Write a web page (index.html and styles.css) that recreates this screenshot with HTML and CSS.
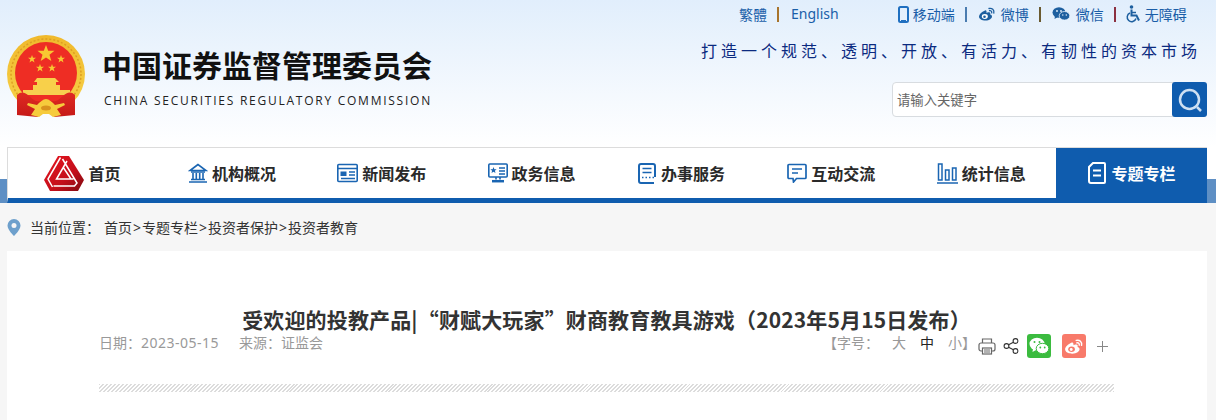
FILE: index.html
```html
<!DOCTYPE html>
<html lang="zh-CN">
<head>
<meta charset="utf-8">
<title>中国证券监督管理委员会</title>
<link rel="stylesheet" href="styles.css">
</head>
<body>
<header class="header">
  <div class="brand">
    <svg class="emblem" viewBox="0 0 84 84" width="84" height="84">
      <defs>
        <linearGradient id="ring" x1="0" y1="0" x2="0" y2="1"><stop offset="0" stop-color="#f0b92c"/><stop offset="1" stop-color="#f7d24a"/></linearGradient>
        <linearGradient id="drape" x1="0" y1="0" x2="0" y2="1"><stop offset="0" stop-color="#e02a22"/><stop offset="1" stop-color="#c51a18"/></linearGradient>
      </defs>
      <circle cx="39" cy="39" r="39" fill="url(#ring)"/>
      <circle cx="39" cy="39" r="35" fill="none" stroke="#dd9e22" stroke-width="1.500" stroke-dasharray="2 2"/>
      <circle cx="39" cy="38" r="31" fill="#ee2d24"/>
      <polygon points="39,10 41.200,15.800 47.500,15.800 42.500,19.800 44.300,26 39,22.400 33.700,26 35.500,19.800 30.500,15.800 36.800,15.800" fill="#f8c832"/>
      <polygon points="25,20 26,22.800 29,22.800 26.600,24.600 27.500,27.500 25,25.800 22.500,27.500 23.400,24.600 21,22.800 24,22.800" fill="#f8c832"/>
      <polygon points="54,20 55,22.800 58,22.800 55.600,24.600 56.500,27.500 54,25.800 51.500,27.500 52.400,24.600 50,22.800 53,22.800" fill="#f8c832"/>
      <polygon points="33,29 34,31.800 37,31.800 34.600,33.600 35.500,36.500 33,34.800 30.500,36.500 31.400,33.600 29,31.800 32,31.800" fill="#f8c832"/>
      <polygon points="45,29 46,31.800 49,31.800 46.600,33.600 47.500,36.500 45,34.800 42.500,36.500 43.400,33.600 41,31.800 44,31.800" fill="#f8c832"/>
      <path d="M30 43h18l4 4h-3v3h4v5H26v-5h4v-3h-3z" fill="#f8d04a"/>
      <path d="M16 55h47v5H16z" fill="#f7d050"/>
      <path d="M10 60c4-4 8-3 12 1 6 5 8 6 12 5l-6 8 3 8-21-2z" fill="url(#drape)"/>
      <path d="M68 60c-4-4-8-3-12 1-6 5-8 6-12 5l6 8-3 8 21-2z" fill="url(#drape)"/>
      <path d="M21 68l9 2c3-3 6-6 9-6s6 3 9 6l9-2 1 2-8 4 4 6-8 2-4-3h-6l-4 3-8-2 4-6-8-4z" fill="#f6cb3c"/>
      <ellipse cx="39" cy="73" rx="5" ry="2.500" fill="#d9931e"/>
    </svg>
    <div class="brand-text">
      <h1 class="brand-cn">中国证券监督管理委员会</h1>
      <p class="brand-en">CHINA SECURITIES REGULATORY COMMISSION</p>
    </div>
  </div>
  <div class="tools">
    <div class="toplinks">
      <a class="tl">繁體</a><i class="sep sep-brown first-sep"></i><a class="tl en">English</a>
      <span class="tl-group">
        <svg class="ti" width="11" height="17" viewBox="0 0 11 17"><rect x="1" y="1" width="9" height="15" rx="1.500" fill="none" stroke="#1f6fc0" stroke-width="2"/><rect x="3" y="14" width="5" height="1" fill="#1f6fc0"/></svg>
        <a class="tl">移动端</a><i class="sep sep-blue"></i>
        <svg class="ti ti-wb" width="18" height="14" viewBox="0 0 18 14"><path d="M7 3.500C3.500 5 1 7.500 1 9.500 1 12 4 13.500 7.500 13.500c4 0 6.500-2.200 6.500-4 0-1.200-1-1.800-1.800-2 .4-1.300 0-2-.9-2.200-1-.2-2.300.4-2.800.6.300-1.400-.3-3-1.500-2.400z" fill="#1d5f9f"/><ellipse cx="6.800" cy="9.500" rx="3" ry="2.400" fill="#fff"/><circle cx="6.500" cy="9.700" r="1.300" fill="#1d5f9f"/><path d="M11 1.500c3-.8 5.500 1.500 4.800 4.500M11.500 3.700c1.500-.3 2.500.7 2.200 2.100" fill="none" stroke="#1d5f9f" stroke-width="1.300" stroke-linecap="round"/></svg>
        <a class="tl">微博</a><i class="sep sep-olive"></i>
        <svg class="ti ti-wx" width="18" height="14" viewBox="0 0 18 14"><ellipse cx="7" cy="5.500" rx="6.500" ry="5.200" fill="#1d5f9f"/><path d="M3 9l-.5 3 3-1.800z" fill="#1d5f9f"/><ellipse cx="12.500" cy="8.800" rx="5.300" ry="4.300" fill="#1d5f9f" stroke="#e8f2fd" stroke-width=".8"/><circle cx="5" cy="4" r=".9" fill="#e8f2fd"/><circle cx="9" cy="4" r=".9" fill="#e8f2fd"/><circle cx="10.800" cy="8" r=".7" fill="#e8f2fd"/><circle cx="14.300" cy="8" r=".7" fill="#e8f2fd"/></svg>
        <a class="tl tl-wx">微信</a><i class="sep sep-red"></i>
        <svg class="ti ti-a11y" width="15" height="18" viewBox="0 0 15 18"><circle cx="5.500" cy="2" r="1.800" fill="#1d5f9f"/><path d="M5.500 4.500v6h5l2.500 5" fill="none" stroke="#1d5f9f" stroke-width="2"/><path d="M5.500 7.500h4.500" stroke="#1d5f9f" stroke-width="1.500"/><path d="M4 8a4.500 4.500 0 1 0 6 5.500" fill="none" stroke="#1d5f9f" stroke-width="1.500"/></svg>
        <a class="tl">无障碍</a>
      </span>
    </div>
    <p class="slogan">打造一个规范、透明、开放、有活力、有韧性的资本市场</p>
    <form class="search">
      <span class="search-input">请输入关键字</span>
      <span class="search-btn">
        <svg width="26" height="26" viewBox="0 0 26 26"><circle cx="12.500" cy="12.500" r="9.500" fill="none" stroke="#cfe0f2" stroke-width="2.500"/><path d="M20 20l4 4" stroke="#cfe0f2" stroke-width="2.500"/></svg>
      </span>
    </form>
  </div>
</header>

<div class="navband">
  <nav class="nav">
    <a class="nav-item">
      <svg class="nav-logo" width="40" height="35" viewBox="0 0 40 35">
        <defs>
          <linearGradient id="lg" x1="0" y1="0" x2="1" y2="1"><stop offset="0" stop-color="#e8141f"/><stop offset=".6" stop-color="#c40f1b"/><stop offset="1" stop-color="#7e0a10"/></linearGradient>
        </defs>
        <path d="M14 0h11l15 24-6 11H6L0 24z" fill="url(#lg)"/>
        <path d="M16.500 1.500L4 23l4.500 8M23 5l-10.500 18h17M18.500 3l14.500 24-2.500 3H9.500M19 11l8 12" fill="none" stroke="#fff" stroke-width="1.500"/>
      </svg>
      <span>首页</span>
    </a>
    <a class="nav-item">
      <svg class="nav-ico" width="20" height="20" viewBox="0 0 20 20" fill="none" stroke="#1a65b2" stroke-width="1.600"><path d="M10 1.500L2 7.500h16z"/><path d="M3 9h14M5 10v6M8.300 10v6M11.700 10v6M15 10v6M3 16.500h14M1 19h18"/></svg>
      <span>机构概况</span>
    </a>
    <a class="nav-item">
      <svg class="nav-ico" width="21" height="20" viewBox="0 0 21 20" fill="none" stroke="#1a65b2" stroke-width="1.600"><rect x=".8" y="1.500" width="19.400" height="17" rx="1"/><path d="M1 5.500h19M12 9h6M12 12h6M4 15.500h14" stroke-width="1.300"/><rect x="3.500" y="8.500" width="6" height="4.500" fill="#1a65b2" stroke="none"/></svg>
      <span>新闻发布</span>
    </a>
    <a class="nav-item">
      <svg class="nav-ico" width="20" height="20" viewBox="0 0 20 20" fill="none" stroke="#1a65b2" stroke-width="1.600"><rect x=".8" y="1" width="18.400" height="13" rx="1"/><path d="M8 14v2.500M12 14v2.500" /><path d="M4 18.200h12" stroke-width="2.500"/><path d="M5.500 4l.9 2.200h2.200l-1.700 1.500.6 2.300-2-1.300-2 1.300.6-2.300L2.400 6.200h2.200z" fill="#1a65b2" stroke="none"/><path d="M11 5h6M11 8h6M11 11h6" stroke-width="1.300"/></svg>
      <span>政务信息</span>
    </a>
    <a class="nav-item">
      <svg class="nav-ico" width="19" height="21" viewBox="0 0 19 21" fill="none" stroke="#1a65b2" stroke-width="2"><path d="M17 14V3a2 2 0 0 0-2-2H3a2 2 0 0 0-2 2v15a2 2 0 0 0 2 2h13"/><path d="M4.500 5.500h9M4.500 9.500h9" stroke-width="1.700"/><path d="M4 14.500h1.500M7.500 14.500H9M11 14.500h1.500M14.500 14.500H16" stroke-width="1.700"/></svg>
      <span>办事服务</span>
    </a>
    <a class="nav-item">
      <svg class="nav-ico" width="20" height="20" viewBox="0 0 20 20" fill="none" stroke="#1a65b2" stroke-width="1.700"><path d="M2 1.500h16a1 1 0 0 1 1 1v12a1 1 0 0 1-1 1H9.500L6.500 19l-.5-3.500H2a1 1 0 0 1-1-1v-12a1 1 0 0 1 1-1z"/><path d="M5 6h10M5 10h6"/></svg>
      <span>互动交流</span>
    </a>
    <a class="nav-item">
      <svg class="nav-ico" width="21" height="21" viewBox="0 0 21 21" fill="none" stroke="#1a65b2" stroke-width="1.500"><rect x="1.500" y="1" width="3.500" height="16"/><rect x="8.500" y="7" width="3.500" height="10"/><rect x="15.500" y="5" width="3.500" height="12"/><path d="M0 20h21"/></svg>
      <span>统计信息</span>
    </a>
    <a class="nav-item nav-active">
      <svg class="nav-ico" width="18" height="22" viewBox="0 0 18 22" fill="none" stroke="#fff" stroke-width="2"><path d="M5 1h11a1 1 0 0 1 1 1v18a1 1 0 0 1-1 1H3a2 2 0 0 1-2-2V5z"/><path d="M5 8.500h8M5 13.500h8" stroke-width="2.200"/></svg>
      <span>专题专栏</span>
    </a>
  </nav>
</div>

<div class="crumbs">
  <svg class="pin" width="14" height="17" viewBox="0 0 14 17"><path d="M7 0a6.500 6.500 0 0 1 6.500 6.500C13.500 11 7 17 7 17S.5 11 .5 6.500A6.500 6.500 0 0 1 7 0z" fill="#6ea0cc"/><circle cx="7" cy="6.500" r="2.500" fill="#f6f6f6"/></svg>
  <span class="crumb-label">当前位置：</span>
  <span class="crumb-path">首页<i class="gt">&gt;</i>专题专栏<i class="gt">&gt;</i>投资者保护<i class="gt">&gt;</i>投资者教育</span>
</div>

<main class="card">
  <h2 class="title">受欢迎的投教产品|“财赋大玩家”财商教育教具游戏（2023年5月15日发布）</h2>
  <div class="meta">
    <div class="meta-left">
      <span class="date">日期：<span class="num">2023-05-15</span></span>
      <span>来源：证监会</span>
    </div>
    <div class="meta-right">
      <span class="fs-label">【字号：</span>
      <span class="fs">大</span><span class="fs fs-on">中</span><span class="fs">小</span><span class="fs-end">】</span>
      <svg class="print" width="18" height="17" viewBox="0 0 18 17" fill="none" stroke="#666" stroke-width="1.200"><path d="M4.500 5V1h9v4"/><rect x="1" y="5" width="16" height="8" rx="2"/><rect x="4.500" y="10" width="9" height="6" fill="#fff"/><path d="M6 12h6M6 14h6"/></svg>
      <svg class="share" width="16" height="16" viewBox="0 0 16 16" fill="none" stroke="#333" stroke-width="1.100"><circle cx="3.500" cy="8" r="2.400"/><circle cx="12.500" cy="3" r="2.400"/><circle cx="12.500" cy="13" r="2.400"/><path d="M5.600 6.800l4.800-2.600M5.600 9.200l4.800 2.600"/></svg>
      <span class="sq sq-wx">
        <svg width="20" height="18" viewBox="0 0 20 18"><ellipse cx="8" cy="7" rx="7.500" ry="6.300" fill="#fff"/><path d="M4 11.500l-.5 3.500 3.500-2z" fill="#fff"/><ellipse cx="13.500" cy="11.500" rx="6.300" ry="5.200" fill="#fff" stroke="#3bbb3f" stroke-width="1"/><circle cx="5.500" cy="5" r="1" fill="#3bbb3f"/><circle cx="10.500" cy="5" r="1" fill="#3bbb3f"/><circle cx="11.300" cy="10.500" r=".9" fill="#3bbb3f"/><circle cx="15.700" cy="10.500" r=".9" fill="#3bbb3f"/></svg>
      </span>
      <span class="sq sq-wb">
        <svg width="20" height="17" viewBox="0 0 18 14"><path d="M7 3.500C3.500 5 1 7.500 1 9.500 1 12 4 13.500 7.500 13.500c4 0 6.500-2.200 6.500-4 0-1.200-1-1.800-1.800-2 .4-1.300 0-2-.9-2.200-1-.2-2.300.4-2.800.6.300-1.400-.3-3-1.500-2.400z" fill="#fff"/><ellipse cx="6.800" cy="9.500" rx="3" ry="2.400" fill="#f87a6a"/><circle cx="6.500" cy="9.700" r="1.300" fill="#fff"/><path d="M11 1.500c3-.8 5.500 1.500 4.800 4.500M11.500 3.700c1.500-.3 2.500.7 2.200 2.100" fill="none" stroke="#fff" stroke-width="1.300" stroke-linecap="round"/></svg>
      </span>
      <svg class="plus" width="11" height="11" viewBox="0 0 11 11"><path d="M5.500 0v11M0 5.500h11" stroke="#888" stroke-width="1"/></svg>
    </div>
  </div>
  <div class="hatch"></div>
</main>
</body>
</html>
```
FILE: styles.css
```css
* { box-sizing: border-box; }
html, body { margin: 0; padding: 0; }
body {
  width: 1216px;
  height: 420px;
  overflow: hidden;
  background: #f6f6f6;
  font-family: "Noto Sans CJK SC", "Noto Sans", sans-serif;
  color: #333;
}
h1, h2, p { margin: 0; }

.header {
  height: 147px;
  display: flex;
  justify-content: space-between;
  padding: 0 9px 0 7px;
  background: linear-gradient(#e1eefc, #ffffff);
}
.brand { display: flex; align-items: flex-start; padding-top: 35px; }
.emblem { display: block; margin-right: 13px; }
.brand-text { padding-top: 9px; }
.brand-cn {
  font-size: 30px;
  line-height: 40px;
  font-weight: 700;
  color: #111;
  white-space: nowrap;
  margin-left: -2px;
}
.brand-en {
  font-family: "Open Sans", sans-serif;
  font-size: 12px;
  line-height: 16px;
  margin-top: 9px;
  letter-spacing: 1.75px;
  color: #222;
  white-space: nowrap;
}

.tools { width: 508px; display: flex; flex-direction: column; align-items: flex-end; }
.toplinks {
  display: flex;
  align-items: center;
  height: 20px;
  margin-top: 4px;
  width: 100%;
  padding-left: 40px;
  font-size: 14px;
  color: #1a5ea8;
}
.tl { line-height: 20px; white-space: nowrap; }
.en { font-family: "Noto Sans", sans-serif; font-size: 14px; }
.tl-group { display: flex; align-items: center; margin-left: 59px; font-size: 14px; }
.ti { display: block; margin-right: 4px; flex: none; }
.ti-wb { margin-right: 5px; }
.tl-wx { margin-left: 2px; }
.sep { display: block; width: 2px; height: 15px; margin: 0 11px 0 10px; flex: none; }
.first-sep { margin: 0 12px 0 10px; }
.sep-red { margin-right: 10px; }
.sep-brown { background: #a8742c; }
.sep-blue { background: #4a7cb0; }
.sep-olive { background: #6a5a30; }
.sep-red { background: #8c3040; }

.slogan {
  margin-top: 15px;
  width: 100%;
  padding-right: 6px;
  text-align: right;
  font-size: 16px;
  font-weight: 400;
  line-height: 22px;
  letter-spacing: 4px;
  color: #0b2a80;
  white-space: nowrap;
}
.search {
  margin-top: 21px;
  width: 315px;
  height: 35px;
  display: flex;
  background: #fff;
  border: 1px solid #d8dce0;
  border-radius: 4px;
}
.search-input {
  flex: 1;
  padding-left: 4px;
  font-size: 13.33px;
  line-height: 33px;
  color: #666;
}
.search-btn {
  width: 35px;
  height: 35px;
  margin: -1px -1px -1px 0;
  background: #0f5cae;
  border-radius: 3px;
  display: flex;
  align-items: center;
  justify-content: center;
}

.navband {
  height: 56px;
  padding: 0 9px 0 7px;
  background: linear-gradient(#ffffff 0, #ffffff 32px, #5e8fc4 32px);
}
.nav {
  height: 56px;
  display: flex;
  background: #fff;
  border-top: 1px solid #dcdcdc;
  border-left: 1px solid #dcdcdc;
  border-bottom: 5px solid #0f5cae;
}
.nav-item {
  flex: 0 0 149.85px;
  display: flex;
  align-items: center;
  justify-content: center;
  font-size: 16px;
  font-weight: 700;
  color: #2a2a2a;
  white-space: nowrap;
}
.nav-item:first-child { flex-basis: 149px; }
.nav-logo { display: block; margin-right: 4px; }
.nav-ico { display: block; margin-right: 4px; }
.nav-active {
  flex: 1 1 auto;
  background: #0f5cae;
  color: #fff;
}
.nav-active .nav-ico { margin-right: 6px; }

.crumbs {
  height: 48px;
  display: flex;
  align-items: center;
  padding-left: 7px;
  font-size: 14px;
  color: #333;
}
.pin { display: block; margin-right: 9px; }
.crumb-label { margin-right: 4px; }
.gt { font-family: "Noto Sans", sans-serif; font-style: normal; margin: 0 1px; }

.card {
  margin: 0 9px 0 7px;
  height: 169px;
  background: #fff;
  padding: 52px 93px 0 92px;
}
.title {
  font-size: 21px;
  line-height: 32px;
  font-weight: 700;
  letter-spacing: .15px;
  color: #333;
  text-align: center;
  white-space: nowrap;
}
.meta {
  display: flex;
  justify-content: space-between;
  align-items: center;
  height: 28px;
  margin-top: -3px;
  font-size: 14px;
  color: #999;
}
.meta-left { display: flex; gap: 20px; line-height: 20px; padding-bottom: 8px; }
.meta-left span { white-space: nowrap; }
.num { font-family: "Noto Sans", sans-serif; letter-spacing: .5px; }
.meta-right { display: flex; align-items: center; margin-right: 6px; }
.fs-label { width: 69px; white-space: nowrap; margin-bottom: 8px; }
.fs { width: 14px; margin-right: 14px; margin-bottom: 8px; }
.fs-on { color: #222; }
.fs-end { width: 9px; margin-left: -14px; margin-right: 7px; margin-bottom: 8px; }
.print { display: block; margin-right: 7px; }
.share { display: block; margin-right: 8px; }
.sq {
  width: 24px;
  height: 24px;
  border-radius: 3px;
  display: flex;
  align-items: center;
  justify-content: center;
}
.sq-wx { background: #3bbb3f; margin-right: 11px; }
.sq-wb { background: #f87a6a; margin-right: 11px; }
.plus { display: block; }
.hatch {
  margin-top: 24px;
  height: 8px;
  background: repeating-linear-gradient(135deg, #dcdcdc 0, #dcdcdc 1.4px, #fff 1.4px, #fff 2.8px);
}
```
